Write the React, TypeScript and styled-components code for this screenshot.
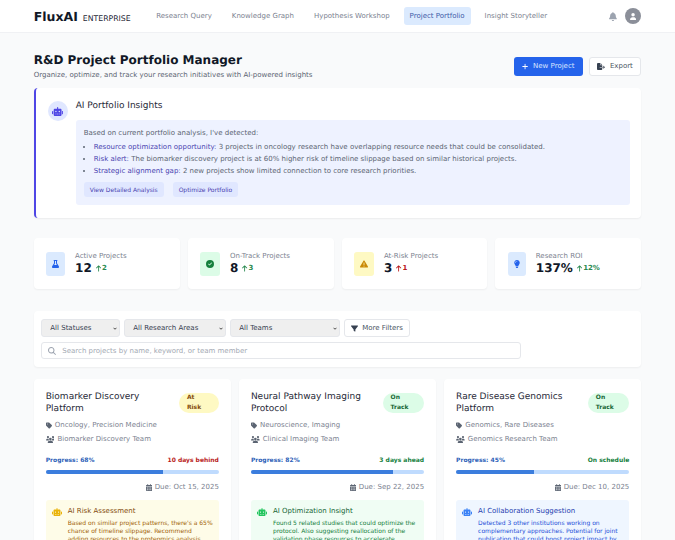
import React from "react";
import styled, { createGlobalStyle } from "styled-components";
import {
  FaRobot, FaBell, FaUser, FaFlask, FaCircleCheck, FaTriangleExclamation, FaLightbulb,
  FaFilter, FaMagnifyingGlass, FaTag, FaUsers, FaCalendarDays, FaPlus, FaFileExport, FaArrowUp,
} from "react-icons/fa6";

const chevron = `url("data:image/svg+xml,%3Csvg xmlns='http://www.w3.org/2000/svg' viewBox='0 0 8 6'%3E%3Cpath d='M1 1.5l3 3 3-3' fill='none' stroke='%23222' stroke-width='1.6'/%3E%3C/svg%3E")`;

const Global = createGlobalStyle`
  html, body { margin: 0; padding: 0; background: #f9fafb; }
  body { font-family: "DejaVu Sans", sans-serif; color: #111827; overflow: hidden; height: 540px; text-rendering: geometricPrecision; }
  * { box-sizing: border-box; }
`;

/* Font Awesome glyphs keep their natural width instead of react-icons' 1em square */
const RobotIcon = styled(FaRobot)`width: 1.25em; flex: none;`;
const FlaskIcon = styled(FaFlask)`width: .875em;`;
const BulbIcon = styled(FaLightbulb)`width: .75em;`;
const BellIcon = styled(FaBell)`width: .875em;`;
const UserIcon = styled(FaUser)`width: .875em;`;
const PlusIcon = styled(FaPlus)`width: .875em;`;
const ExportIcon = styled(FaFileExport)`width: 1.125em;`;
const TagIcon = styled(FaTag)`width: .875em; flex: none;`;
const UsersIcon = styled(FaUsers)`width: 1.25em; flex: none;`;
const CalendarIcon = styled(FaCalendarDays)`width: .875em; flex: none;`;
const ArrowIcon = styled(FaArrowUp)`width: .75em; flex: none;`;

const Header = styled.header`
  height: 33px; background: #fff; border-bottom: 1px solid #f0f1f4;
  display: flex; align-items: center; padding: 0 33.7px;
`;
const Logo = styled.div`display: flex; align-items: baseline; gap: 5px; margin-right: 19.5px;`;
const LogoMain = styled.span`font-size: 12.5px; font-weight: 700; color: #111827;`;
const LogoSub = styled.span`font-size: 7.75px; color: #1f2937;`;
const Nav = styled.nav`display: flex; gap: 8px; flex: 1;`;
const NavItem = styled.a<{ $active?: boolean }>`
  font-size: 7px; padding: 5px 6px; border-radius: 3px; line-height: 8px;
  color: ${(p) => (p.$active ? "#3d5aa8" : "#7b8290")};
  background: ${(p) => (p.$active ? "#dbeafe" : "transparent")};
`;
const HeaderRight = styled.div`display: flex; align-items: center; gap: 8px; color: #9ca3af; font-size: 9px;`;
const Avatar = styled.div`
  width: 16px; height: 16px; border-radius: 50%; background: #8b8f99; color: #fff;
  display: flex; align-items: center; justify-content: center; font-size: 7px;
`;

const Main = styled.main`padding: 19px 33.7px 0;`;
const TitleRow = styled.div`display: flex; justify-content: space-between; align-items: center; margin-bottom: 8px;`;
const Title = styled.h1`font-size: 12px; font-weight: 700; margin: 0 0 2px; line-height: 16px;`;
const Subtitle = styled.p`font-size: 7px; color: #5b6472; margin: 0; line-height: 10px;`;
const Actions = styled.div`display: flex; gap: 6px;`;
const PrimaryButton = styled.button`
  height: 19px; padding: 0 8px; border: 0; border-radius: 3px; background: #2563eb; color: #dbe6ff;
  font: 500 7px "DejaVu Sans", sans-serif; display: flex; align-items: center; gap: 5px;
  svg { color: #fff; }
`;
const SecondaryButton = styled.button`
  height: 19px; padding: 0 7.5px; border: 1px solid #e5e7eb; border-radius: 3px; background: #fff; color: #4b5563;
  font: 400 7px "DejaVu Sans", sans-serif; display: flex; align-items: center; gap: 5px;
  svg { color: #374151; }
`;

const Insights = styled.section`
  height: 130px; background: #fff; border-left: 2px solid #4f46e5; border-radius: 4px;
  box-shadow: 0 1px 2px rgba(0,0,0,.06); padding: 12px 11px 12px 12px; display: flex; gap: 8px; margin-bottom: 20px;
`;
const InsightIcon = styled.div`
  width: 20px; height: 20px; border-radius: 50%; background: #e0e7ff; color: #4f46e5; flex: none;
  display: flex; align-items: center; justify-content: center; font-size: 9px; margin-top: 1px;
`;
const InsightBody = styled.div`flex: 1;`;
const InsightTitle = styled.h2`font-size: 9px; font-weight: 500; margin: 0 0 7px; line-height: 13px; color: #1f2937;`;
const InsightBox = styled.div`background: #eef2ff; border-radius: 3px; padding: 8px; height: 85px;`;
const InsightText = styled.p`font-size: 7px; color: #5b6472; margin: 0 0 3px; line-height: 10px;`;
const InsightList = styled.ul`margin: 0 0 5px; padding: 0 0 0 10px; font-size: 7px; line-height: 12px; color: #5b6472;`;
const Hl = styled.span`color: #4a43b0;`;
const InsightActions = styled.div`display: flex; gap: 9px;`;
const InsightButton = styled.button`
  height: 15px; padding: 0 6px; border: 0; border-radius: 3px; background: #e0e7ff; color: #4a43b0;
  font: 500 6px "DejaVu Sans", sans-serif;
`;

const Stats = styled.div`display: grid; grid-template-columns: repeat(4, 1fr); gap: 8px; margin-bottom: 22px;`;
const Stat = styled.div`
  height: 51px; background: #fff; border-radius: 4px; box-shadow: 0 1px 2px rgba(0,0,0,.05);
  display: flex; align-items: center; gap: 10px; padding: 0 12.4px;
`;
const StatIcon = styled.div<{ $bg: string; $fg: string }>`
  height: 24px; padding: 0 6px; border-radius: 3px; background: ${(p) => p.$bg}; color: ${(p) => p.$fg};
  display: flex; align-items: center; justify-content: center; font-size: 8px; flex: none;
`;
const StatLabel = styled.div`font-size: 7px; color: #7b8290; line-height: 10px;`;
const StatValue = styled.div`display: flex; align-items: center; gap: 4px; font-size: 12px; font-weight: 700; line-height: 15px;`;
const StatDelta = styled.span<{ $bad?: boolean }>`
  display: inline-flex; align-items: center; gap: 1px; font-size: 7px; font-weight: 600;
  color: ${(p) => (p.$bad ? "#b91c1c" : "#2a8a50")};
`;

const Filters = styled.section`
  height: 56px; background: #fff; border-radius: 4px; box-shadow: 0 1px 2px rgba(0,0,0,.05);
  padding: 8px 7.6px; margin-bottom: 12px; display: flex; flex-direction: column; gap: 5px;
`;
const FilterRow = styled.div`display: flex; gap: 4px;`;
const Select = styled.select<{ $w: number }>`
  appearance: none; width: ${(p) => p.$w}px; height: 18px; font: 400 7px "DejaVu Sans", sans-serif; color: #374151;
  background: #efefef ${chevron} no-repeat right 2px center / 4px 3px;
  border: 1px solid #e5e7eb; border-radius: 3px; padding: 0 8px;
`;
const MoreButton = styled.button`
  height: 18px; padding: 0 6px; background: #fff; border: 1px solid #e5e7eb; border-radius: 3px; color: #4b5563;
  font: 400 7px "DejaVu Sans", sans-serif; display: flex; align-items: center; gap: 4px;
  svg { color: #374151; }
`;
const SearchBox = styled.div`
  width: 480px; height: 17px; border: 1px solid #e5e7eb; border-radius: 3px; background: #fff;
  display: flex; align-items: center; gap: 6px; padding: 0 6px; color: #a3a9b3; font-size: 7px;
  svg { font-size: 8px; color: #9ca3af; }
`;

const Cards = styled.div`display: grid; grid-template-columns: repeat(3, 1fr); gap: 8px;`;
const Card = styled.article`
  background: #fff; border-radius: 4px; box-shadow: 0 1px 2px rgba(0,0,0,.05); padding: 12px;
`;
const CardTop = styled.div`display: flex; justify-content: space-between; align-items: flex-start; gap: 8px; margin-bottom: 3px;`;
const CardTitle = styled.h3`font-size: 9px; font-weight: 500; line-height: 12px; margin: 0; color: #1f2937;`;
const Badge = styled.span<{ $bg: string; $fg: string; $w: number }>`
  flex: none; width: ${(p) => p.$w}px; padding: 0 10px 0 8px; height: 20px; border-radius: 10px; margin-top: 2px;
  background: ${(p) => p.$bg}; color: ${(p) => p.$fg}; font-size: 6px; font-weight: 700; line-height: 10px;
`;
const Meta = styled.div`display: flex; align-items: center; gap: 3px; font-size: 7px; color: #7b8290; line-height: 14px; svg { color: #5b6472; }`;
const ProgressRow = styled.div`display: flex; justify-content: space-between; font-size: 6px; font-weight: 600; margin-top: 11px; margin-bottom: 5px; line-height: 8px;`;
const ProgressLabel = styled.span`color: #2d5fb8;`;
const Schedule = styled.span<{ $bad?: boolean }>`color: ${(p) => (p.$bad ? "#b91c1c" : "#15803d")};`;
const Track = styled.div`height: 4px; border-radius: 2px; background: #bfdbfe; overflow: hidden;`;
const Fill = styled.div`height: 100%; background: #3b7ddd;`;
const Due = styled.div`display: flex; justify-content: flex-end; align-items: center; gap: 3px; font-size: 7px; color: #7b8290; margin: 8px 0 7.5px; line-height: 10px; svg { color: #5b6472; }`;
const Suggestion = styled.div<{ $bg: string; $title: string; $text: string; $icon: string }>`
  background: ${(p) => p.$bg}; border-radius: 3px; padding: 6px; display: flex; gap: 6px;
  > svg { color: ${(p) => p.$icon}; font-size: 8px; margin-top: 2px; }
  h4 { margin: 0 0 4.5px; font-size: 7px; font-weight: 500; line-height: 10px; color: ${(p) => p.$title}; }
  p { margin: 0; font-size: 6px; line-height: 8px; color: ${(p) => p.$text}; }
`;

const stats = [
  { label: "Active Projects", value: "12", delta: "2", icon: <FlaskIcon />, bg: "#dbeafe", fg: "#2563eb" },
  { label: "On-Track Projects", value: "8", delta: "3", icon: <FaCircleCheck />, bg: "#dcfce7", fg: "#15803d" },
  { label: "At-Risk Projects", value: "3", delta: "1", bad: true, icon: <FaTriangleExclamation />, bg: "#fef9c3", fg: "#ca8a04" },
  { label: "Research ROI", value: "137%", delta: "12%", icon: <BulbIcon />, bg: "#dbeafe", fg: "#2563eb" },
];

const good = { bg: "#dcfce7", fg: "#166534" };
const projects = [
  {
    title: "Biomarker Discovery Platform", badge: "At Risk", badgeW: 40, badgeC: { bg: "#fef9c3", fg: "#854d0e" },
    tags: "Oncology, Precision Medicine", team: "Biomarker Discovery Team", pct: 68, sched: "10 days behind", bad: true,
    due: "Due: Oct 15, 2025", aiTitle: "AI Risk Assessment",
    ai: "Based on similar project patterns, there's a 65% chance of timeline slippage. Recommend adding resources to the proteomics analysis phase.",
    c: { $bg: "#fefce8", $title: "#854d0e", $text: "#a16207", $icon: "#eab308" },
  },
  {
    title: "Neural Pathway Imaging Protocol", badge: "On Track", badgeW: 41.5, badgeC: good,
    tags: "Neuroscience, Imaging", team: "Clinical Imaging Team", pct: 82, sched: "3 days ahead",
    due: "Due: Sep 22, 2025", aiTitle: "AI Optimization Insight",
    ai: "Found 5 related studies that could optimize the protocol. Also suggesting reallocation of the validation phase resources to accelerate completion.",
    c: { $bg: "#f0fdf4", $title: "#166534", $text: "#15803d", $icon: "#22c55e" },
  },
  {
    title: "Rare Disease Genomics Platform", badge: "On Track", badgeW: 41.5, badgeC: good,
    tags: "Genomics, Rare Diseases", team: "Genomics Research Team", pct: 45, sched: "On schedule",
    due: "Due: Dec 10, 2025", aiTitle: "AI Collaboration Suggestion",
    ai: "Detected 3 other institutions working on complementary approaches. Potential for joint publication that could boost project impact by 40%.",
    c: { $bg: "#eff6ff", $title: "#1e40af", $text: "#1d4ed8", $icon: "#3b82f6" },
  },
];

export default function App() {
  return (
    <>
      <Global />
      <Header>
        <Logo><LogoMain>FluxAI</LogoMain><LogoSub>ENTERPRISE</LogoSub></Logo>
        <Nav>
          <NavItem>Research Query</NavItem>
          <NavItem>Knowledge Graph</NavItem>
          <NavItem>Hypothesis Workshop</NavItem>
          <NavItem $active>Project Portfolio</NavItem>
          <NavItem>Insight Storyteller</NavItem>
        </Nav>
        <HeaderRight><BellIcon /><Avatar><UserIcon /></Avatar></HeaderRight>
      </Header>
      <Main>
        <TitleRow>
          <div>
            <Title>R&amp;D Project Portfolio Manager</Title>
            <Subtitle>Organize, optimize, and track your research initiatives with AI-powered insights</Subtitle>
          </div>
          <Actions>
            <PrimaryButton><PlusIcon />New Project</PrimaryButton>
            <SecondaryButton><ExportIcon />Export</SecondaryButton>
          </Actions>
        </TitleRow>
        <Insights>
          <InsightIcon><RobotIcon /></InsightIcon>
          <InsightBody>
            <InsightTitle>AI Portfolio Insights</InsightTitle>
            <InsightBox>
              <InsightText>Based on current portfolio analysis, I've detected:</InsightText>
              <InsightList>
                <li><Hl>Resource optimization opportunity:</Hl> 3 projects in oncology research have overlapping resource needs that could be consolidated.</li>
                <li><Hl>Risk alert:</Hl> The biomarker discovery project is at 60% higher risk of timeline slippage based on similar historical projects.</li>
                <li><Hl>Strategic alignment gap:</Hl> 2 new projects show limited connection to core research priorities.</li>
              </InsightList>
              <InsightActions>
                <InsightButton>View Detailed Analysis</InsightButton>
                <InsightButton>Optimize Portfolio</InsightButton>
              </InsightActions>
            </InsightBox>
          </InsightBody>
        </Insights>
        <Stats>
          {stats.map((s) => (
            <Stat key={s.label}>
              <StatIcon $bg={s.bg} $fg={s.fg}>{s.icon}</StatIcon>
              <div>
                <StatLabel>{s.label}</StatLabel>
                <StatValue>{s.value}<StatDelta $bad={s.bad}><ArrowIcon />{s.delta}</StatDelta></StatValue>
              </div>
            </Stat>
          ))}
        </Stats>
        <Filters>
          <FilterRow>
            <Select $w={79}><option>All Statuses</option></Select>
            <Select $w={102}><option>All Research Areas</option></Select>
            <Select $w={110}><option>All Teams</option></Select>
            <MoreButton><FaFilter />More Filters</MoreButton>
          </FilterRow>
          <SearchBox><FaMagnifyingGlass />Search projects by name, keyword, or team member</SearchBox>
        </Filters>
        <Cards>
          {projects.map((p) => (
            <Card key={p.title}>
              <CardTop>
                <CardTitle>{p.title}</CardTitle>
                <Badge $bg={p.badgeC.bg} $fg={p.badgeC.fg} $w={p.badgeW}>{p.badge}</Badge>
              </CardTop>
              <Meta><TagIcon />{p.tags}</Meta>
              <Meta><UsersIcon />{p.team}</Meta>
              <ProgressRow>
                <ProgressLabel>Progress: {p.pct}%</ProgressLabel>
                <Schedule $bad={p.bad}>{p.sched}</Schedule>
              </ProgressRow>
              <Track><Fill style={{ width: `${p.pct}%` }} /></Track>
              <Due><CalendarIcon />{p.due}</Due>
              <Suggestion {...p.c}>
                <RobotIcon />
                <div><h4>{p.aiTitle}</h4><p>{p.ai}</p></div>
              </Suggestion>
            </Card>
          ))}
        </Cards>
      </Main>
    </>
  );
}
